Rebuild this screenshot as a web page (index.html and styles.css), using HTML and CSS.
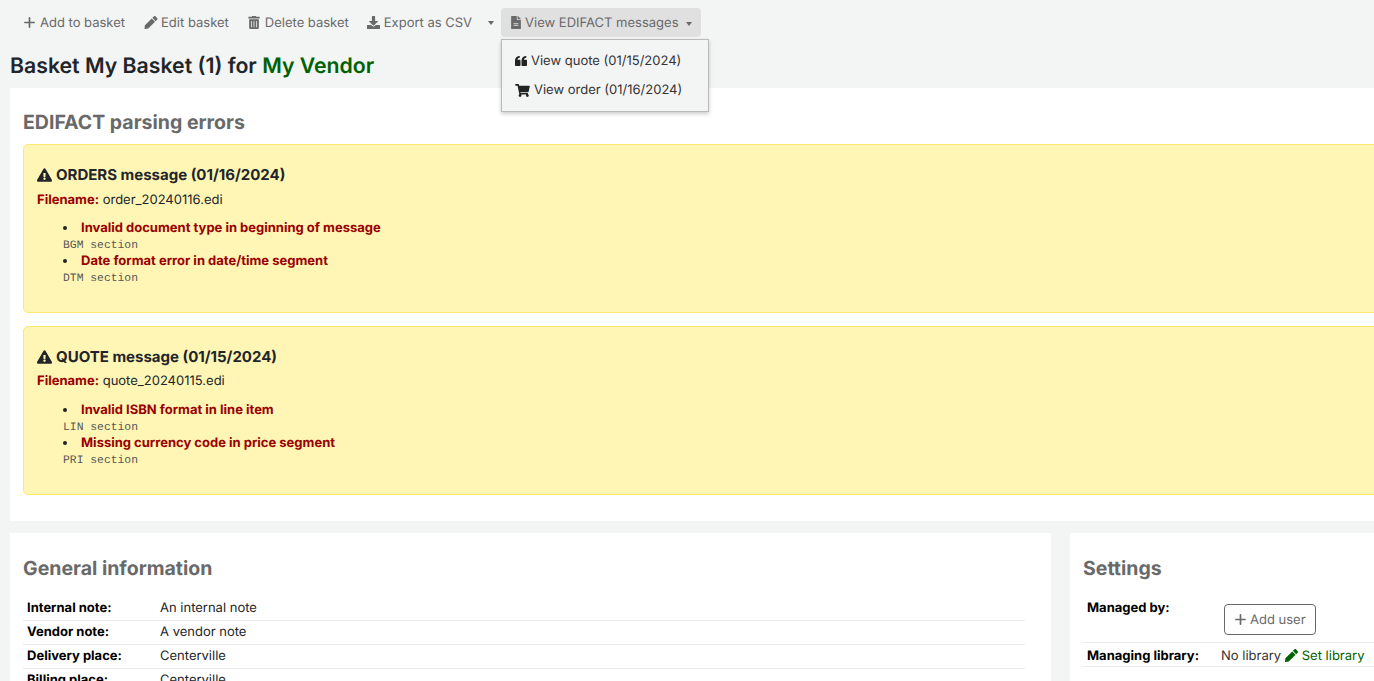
FILE: index.html
```html
<!DOCTYPE html>
<html lang="en">
<head>
<meta charset="utf-8">
<title>Basket My Basket (1)</title>
<link rel="stylesheet" href="styles.css">
</head>
<body>
<div class="toolbar">
  <a class="tool t-add"><svg class="ic ic-plus" viewBox="16 48 416 416"><path d="M256 80c0-17.700-14.300-32-32-32s-32 14.300-32 32V224H48c-17.700 0-32 14.300-32 32s14.300 32 32 32H192V432c0 17.700 14.300 32 32 32s32-14.300 32-32V288H400c17.700 0 32-14.300 32-32s-14.300-32-32-32H256V80z"/></svg>Add to basket</a>
  <a class="tool t-edit"><svg class="ic ic-pen" viewBox="0 0 512 512"><path d="M497 74 438 15c-20-20-52-20-72 0l-56 56 131 131 56-56c20-20 20-52 0-72zM286 95 16 365 0 496c-2 11 8 18 16 16l131-16 270-270z"/></svg>Edit basket</a>
  <a class="tool t-del"><svg class="ic ic-trash" viewBox="0 0 448 512"><path d="M432 32H312l-9-19A24 24 0 0 0 281 0H167a24 24 0 0 0-22 13l-9 19H16A16 16 0 0 0 0 48v32a16 16 0 0 0 16 16h416a16 16 0 0 0 16-16V48a16 16 0 0 0-16-16zM32 128v336a48 48 0 0 0 48 48h288a48 48 0 0 0 48-48V128zm104 304a16 16 0 0 1-32 0V208a16 16 0 0 1 32 0zm104 0a16 16 0 0 1-32 0V208a16 16 0 0 1 32 0zm104 0a16 16 0 0 1-32 0V208a16 16 0 0 1 32 0z"/></svg>Delete basket</a>
  <a class="tool t-exp"><svg class="ic ic-down" viewBox="0 0 512 512"><path d="M216 0h80c13 0 24 11 24 24v168h88c18 0 27 22 14 34L270 378c-8 8-20 8-28 0L90 226c-13-12-4-34 14-34h88V24c0-13 11-24 24-24zm296 376v112c0 13-11 24-24 24H24c-13 0-24-11-24-24V376c0-13 11-24 24-24h147l49 49c20 20 52 20 72 0l49-49h147c13 0 24 11 24 24z"/></svg>Export as CSV</a>
  <span class="caret-btn"><i class="caret"></i></span>
  <a class="tool t-open"><svg class="ic ic-file" viewBox="0 0 384 512"><path d="M224 136V0H24C11 0 0 11 0 24v464c0 13 11 24 24 24h336c13 0 24-11 24-24V160H248c-13 0-24-11-24-24zm64 236c0 7-5 12-12 12H108c-7 0-12-5-12-12v-8c0-7 5-12 12-12h168c7 0 12 5 12 12zm0-64c0 7-5 12-12 12H108c-7 0-12-5-12-12v-8c0-7 5-12 12-12h168c7 0 12 5 12 12zm96-186v6H256V0h6c6 0 12 3 17 7l98 98c4 5 7 11 7 17z"/></svg>View EDIFACT messages<i class="caret caret-gap"></i></a>
</div>

<div class="menu">
  <a class="menu-item"><svg class="mic" viewBox="0 40 480 400"><path d="M0 220C0 110 80 40 190 40v70c-55 0-90 35-90 80h90q30 0 30 30v190q0 30-30 30H30q-30 0-30-30zM260 220C260 110 340 40 450 40v70c-55 0-90 35-90 80h90q30 0 30 30v190q0 30-30 30H290q-30 0-30-30z"/></svg>View quote (01/15/2024)</a>
  <a class="menu-item"><svg class="mic mic-cart" viewBox="0 0 576 512"><path d="M528 301l47-208c4-15-8-29-23-29H159l-9-45C148 8 138 0 126 0H24C11 0 0 11 0 24v16c0 13 11 24 24 24h70l70 343c-17 10-28 28-28 49 0 31 25 56 56 56s56-25 56-56c0-16-6-30-17-40h210c-11 10-17 24-17 40 0 31 25 56 56 56s56-25 56-56c0-22-13-41-32-51l5-24c4-15-8-29-23-29H211l-7-32h301c11 0 21-8 23-19z"/></svg>View order (01/16/2024)</a>
</div>

<h1 class="title">Basket My Basket (1) for <a class="vendor">My Vendor</a></h1>

<section class="panel errors">
  <h2 class="heading">EDIFACT parsing errors</h2>
  <div class="alert">
    <h3 class="alert-title"><svg class="warn" viewBox="0 0 576 512"><path d="M569 440c18 32-5 72-42 72H49c-37 0-60-40-42-72L246 24c19-32 65-32 84 0zM288 354c-25 0-46 21-46 46s21 46 46 46 46-21 46-46-21-46-46-46zm-44-165 7 136c0 6 6 11 12 11h50c6 0 12-5 12-11l7-136c0-7-5-13-12-13h-64c-7 0-12 6-12 13z"/></svg>ORDERS message (01/16/2024)</h3>
    <p class="file"><b>Filename:</b> order_20240116.edi</p>
    <ul class="errs">
      <li><b>Invalid document type in beginning of message</b><code>BGM section</code></li>
      <li><b>Date format error in date/time segment</b><code>DTM section</code></li>
    </ul>
  </div>
  <div class="alert">
    <h3 class="alert-title"><svg class="warn" viewBox="0 0 576 512"><path d="M569 440c18 32-5 72-42 72H49c-37 0-60-40-42-72L246 24c19-32 65-32 84 0zM288 354c-25 0-46 21-46 46s21 46 46 46 46-21 46-46-21-46-46-46zm-44-165 7 136c0 6 6 11 12 11h50c6 0 12-5 12-11l7-136c0-7-5-13-12-13h-64c-7 0-12 6-12 13z"/></svg>QUOTE message (01/15/2024)</h3>
    <p class="file file-2"><b>Filename:</b> quote_20240115.edi</p>
    <ul class="errs errs-2">
      <li><b>Invalid ISBN format in line item</b><code>LIN section</code></li>
      <li><b>Missing currency code in price segment</b><code>PRI section</code></li>
    </ul>
  </div>
</section>

<div class="columns">
  <section class="panel general">
    <h2 class="heading">General information</h2>
    <div class="rows">
      <div class="row"><span class="lbl">Internal note:</span><span>An internal note</span></div>
      <div class="row"><span class="lbl">Vendor note:</span><span>A vendor note</span></div>
      <div class="row"><span class="lbl">Delivery place:</span><span>Centerville</span></div>
      <div class="row"><span class="lbl">Billing place:</span><span>Centerville</span></div>
    </div>
  </section>
  <section class="panel settings">
    <h2 class="heading">Settings</h2>
    <div class="rows">
      <div class="row row-managed"><span class="lbl lbl-managed">Managed by:</span><a class="btn-user"><svg class="ic-user" viewBox="16 48 416 416"><path d="M256 80c0-17.700-14.300-32-32-32s-32 14.300-32 32V224H48c-17.700 0-32 14.300-32 32s14.300 32 32 32H192V432c0 17.700 14.300 32 32 32s32-14.300 32-32V288H400c17.700 0 32-14.300 32-32s-14.300-32-32-32H256V80z"/></svg>Add user</a></div>
      <div class="row row-lib"><span class="lbl">Managing library:</span><span class="nolib">No library <a class="setlib"><svg class="ic-set" viewBox="0 0 512 512"><path d="M497 74 438 15c-20-20-52-20-72 0l-56 56 131 131 56-56c20-20 20-52 0-72zM286 95 16 365 0 496c-2 11 8 18 16 16l131-16 270-270z"/></svg>Set library</a></span></div>
    </div>
  </section>
</div>
</body>
</html>
```
FILE: styles.css
```css
* { box-sizing: border-box; }
html, body { height: 681px; overflow: hidden; }
body {
  margin: 0;
  width: 1374px;
  position: relative;
  background: #f3f4f4;
  color: #212529;
  font: 13px/19.5px Inter, "Noto Sans", sans-serif;
  text-rendering: geometricPrecision;
}
.toolbar { display: flex; align-items: center; height: 29px; position: absolute; top: 8px; left: 16px; }
.tool { display: flex; align-items: center; height: 29px; padding: 2px 8px 0; color: #696969; white-space: nowrap; }
.ic { height: 13px; fill: #696969; flex: none; margin-top: -2px; }
.ic-plus { width: 11px; height: 11px; margin-right: 5px; }
.ic-pen { width: 14px; margin-right: 3px; }
.ic-trash { width: 12px; margin-right: 5px; }
.ic-down { width: 13px; margin-right: 4px; }
.ic-file { width: 10px; margin-right: 4px; }
.t-edit, .t-del { margin-left: 3px; }
.t-exp { margin-left: 2px; }
.caret-btn { display: flex; align-items: center; height: 29px; padding: 0 6px; margin-left: 2px; }
.caret { display: inline-block; border-top: 4px solid #696969; border-left: 3.5px solid transparent; border-right: 3.5px solid transparent; }
.caret-gap { margin-left: 7px; }
.t-open { background: #e0e0e0; border-radius: 4px; padding: 2px 9px 0 10px; margin-left: 1px; }
.menu {
  position: absolute; left: 501px; top: 39px; width: 208px; height: 73px;
  background: #f3f4f4; border: 1px solid #b9b9b9;
  box-shadow: 0 2px 4px rgba(0,0,0,.2);
  padding: 7px 0 0; z-index: 5;
}
.menu-item { display: flex; align-items: center; height: 29px; padding-left: 13px; color: #333; white-space: nowrap; }
.mic { width: 12px; height: 10px; fill: #222; margin-right: 4px; margin-top: -2px; }
.mic-cart { width: 15px; height: 13px; margin-right: 4px; margin-top: -1px; }
.title { margin: 0; padding: 53px 0 0 10px; height: 88px; font-size: 21.25px; line-height: 26px; font-weight: 600; }
.vendor { color: #006100; }
.panel { background: #fff; padding: 20px 13px 0; }
.errors { margin-left: 10px; width: 1500px; height: 433px; }
.heading { margin: 0 0 8px; font-size: 19.5px; line-height: 28px; font-weight: 700; color: #696969; }
.alert { background: #fff5b5; border: 1px solid #fbe96f; border-radius: 5px; height: 169px; margin-bottom: 13px; padding: 20px 13px 0; }
.alert-title { display: flex; align-items: center; margin: 0; font-size: 15px; line-height: 20px; font-weight: 700; }
.warn { width: 15px; height: 14px; fill: #212529; margin-right: 4px; }
.file { margin: 6px 0 0; }
.file-2 { margin-top: 5px; }
.file b { color: #900; font-weight: 700; }
.errs { margin: 8px 0 0; padding: 0 0 0 26px; list-style-position: inside; }
.errs-2 { margin-top: 9px; }
.errs b { color: #900; font-weight: 700; }
.errs code { display: block; font: 11.375px/13.5px "Liberation Mono", monospace; color: #555; margin-top: 2px; margin-bottom: -2px; }
.columns { display: flex; margin: 12px 0 0 10px; gap: 19px; width: 1500px; }
.panel.general, .panel.settings { padding-top: 21px; }
.general { width: 1041px; height: 148px; padding-right: 26px; overflow: hidden; }
.settings { flex: 1; height: 148px; }
.rows { margin-top: 15px; }
.row { display: flex; align-items: center; height: 24px; border-bottom: 1px solid #e9ecef; white-space: nowrap; }
.lbl { width: 137px; padding-left: 4px; font-weight: 700; color: #000; flex: none; }
.lbl-managed { padding-top: 2px; }
.row-managed { align-items: flex-start; height: 46px; }
.row-lib { padding-top: 4px; }
.btn-user { display: flex; align-items: center; margin-top: 7px; margin-left: 4px; height: 31px; padding: 2px 9px 0 10px; border: 1px solid #696969; border-radius: 4px; color: #696969; }
.ic-user { width: 11px; height: 11px; fill: #696969; margin-right: 4px; margin-top: -2px; }
.nolib { color: #333; margin-left: 1px; }
.setlib { color: #006100; }
.ic-set { width: 13px; height: 13px; fill: #006100; margin-right: 4px; vertical-align: -2px; }
```
